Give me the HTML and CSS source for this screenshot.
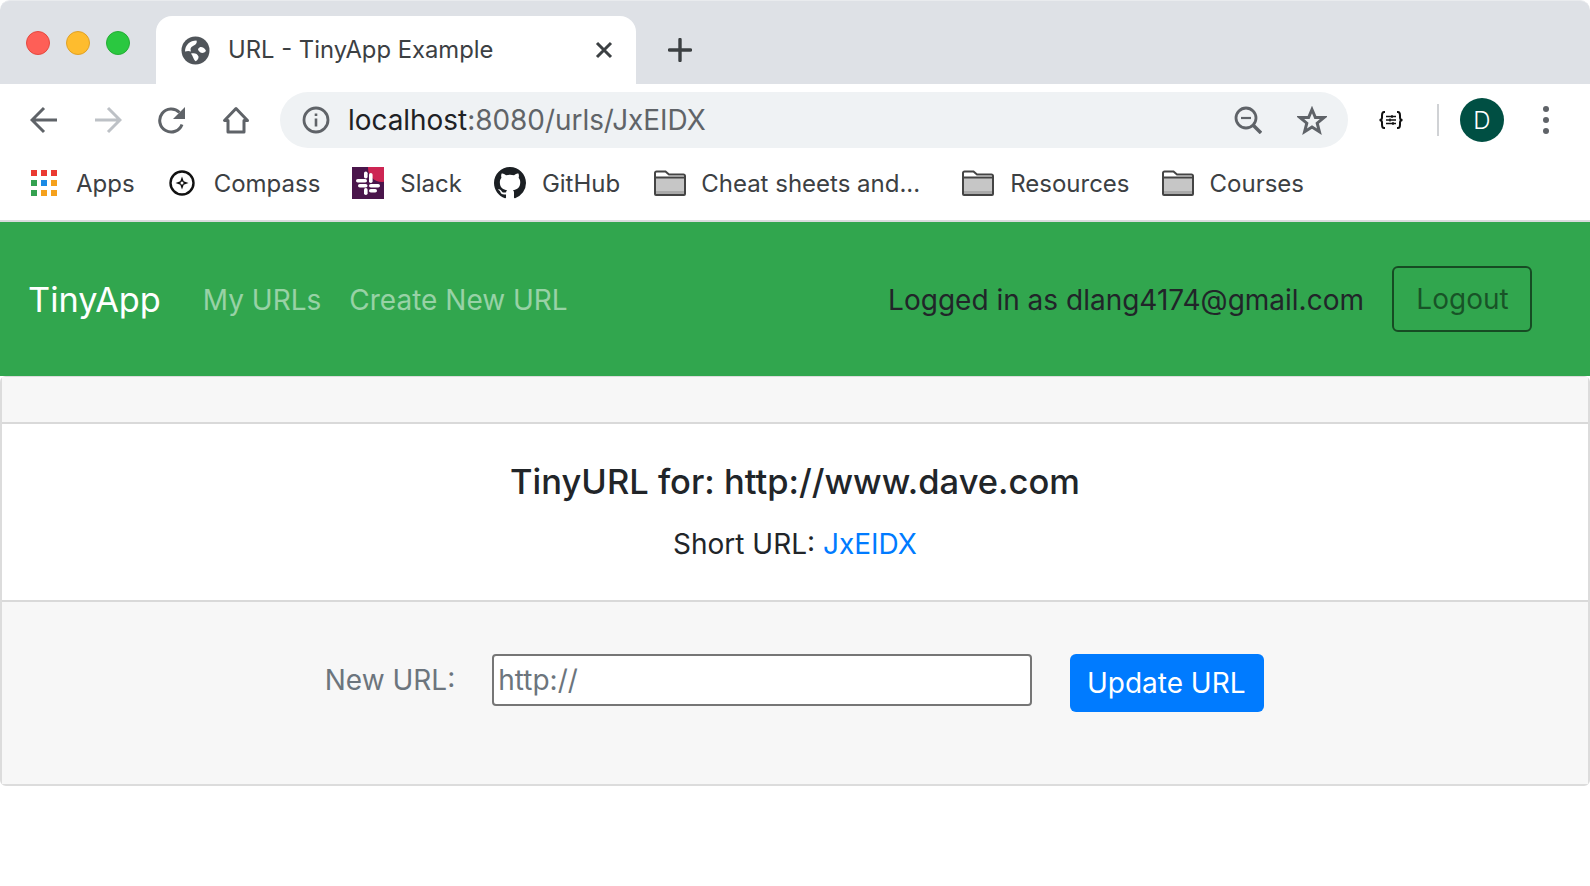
FILE: index.html
```html
<!DOCTYPE html>
<html lang="en">
<head>
<meta charset="utf-8">
<title>URL - TinyApp Example</title>
<link rel="stylesheet" href="styles.css">
</head>
<body>
<svg class="defs" width="0" height="0" aria-hidden="true">
  <symbol id="folder" viewBox="0 0 32 26">
    <path d="M1 24V3a1.5 1.5 0 0 1 1.5-1.5h9L15 4.500h14.500A1.500 1.500 0 0 1 31 6v18a1 1 0 0 1-1 1H2a1 1 0 0 1-1-1z" fill="#fff"/>
    <rect x="2" y="7.500" width="28" height="17" fill="#c6c6c6"/>
    <rect x="2" y="21" width="28" height="3.500" fill="#a9a9a9"/>
    <path d="M1 24V3a1.500 1.500 0 0 1 1.500-1.500h9L15 4.500h14.500A1.500 1.500 0 0 1 31 6v18a1 1 0 0 1-1 1H2a1 1 0 0 1-1-1zM1 7.500h30" fill="none" stroke="#444" stroke-width="2"/>
  </symbol>
</svg>
<header class="chrome">
  <div class="tabstrip">
    <div class="lights">
      <span class="light red"></span><span class="light yellow"></span><span class="light green"></span>
    </div>
    <div class="tab">
      <svg class="globe" width="29" height="29" viewBox="0 0 29 29"><circle cx="14.500" cy="14.500" r="14" fill="#50555a"/><path d="M4 15.500C4 9 9 4.500 15.500 4.500c1 2.500-1 4.500-3.500 5.500-2.500 1.200-3 3-2 5.500-2.500-1-4-.5-6 0zM10 17.500c3.500-1 6.500 0 7.500 3 .3 2-1 4-3 4.800-2-2-2.500-5-4.500-7.800zM17 13c1.500-2.500 3.500-2.500 5-1.500 1.500.8 2.500 2 3 3.500-1.500 2-4 2.500-5.500 1.500-1.200-.7-2.500-2-2.500-3.500z" fill="#fff"/></svg>
      <span class="tab-title">URL - TinyApp Example</span>
      <svg class="tab-close" width="18" height="18" viewBox="0 0 18 18"><path d="M2 2l14 14M16 2L2 16" stroke="#3c4043" stroke-width="3" fill="none"/></svg>
    </div>
    <svg class="new-tab" width="24" height="24" viewBox="0 0 24 24"><path d="M12 1.500v21M1.500 12h21" stroke="#3c4043" stroke-width="3.400" stroke-linecap="round" fill="none"/></svg>
  </div>
  <div class="toolbar">
    <svg class="tool" width="28" height="28" viewBox="0 0 28 28"><path d="M27 14H3M14 2L2 14l12 12" fill="none" stroke="#5f6368" stroke-width="3"/></svg>
    <svg class="tool" width="28" height="28" viewBox="0 0 28 28"><path d="M1 14h24M14 2l12 12-12 12" fill="none" stroke="#bdc1c6" stroke-width="3"/></svg>
    <svg class="tool" width="28" height="28" viewBox="0 0 28 28"><path d="M24 18.500A11.500 11.500 0 1 1 21.500 6.500" fill="none" stroke="#5f6368" stroke-width="3"/><path d="M27 1v12H15z" fill="#5f6368"/></svg>
    <svg class="tool" width="28" height="28" viewBox="0 0 28 28"><path d="M14 2.500L2.500 14.500H6V26h16V14.500h3.500z" fill="none" stroke="#5f6368" stroke-width="3" stroke-linejoin="round"/></svg>
    <div class="omnibox">
      <svg class="omni-info" width="28" height="28" viewBox="0 0 28 28"><circle cx="14" cy="14" r="12" fill="none" stroke="#5f6368" stroke-width="2.800"/><path d="M12.700 7.500h2.600v2.600h-2.600zM12.700 12.500h2.600v8h-2.600z" fill="#5f6368"/></svg>
      <span class="url"><span class="url-host">localhost</span>:8080/urls/JxEIDX</span>
      <svg class="omni-zoom" width="28" height="28" viewBox="0 0 28 28"><circle cx="12" cy="12" r="10" fill="none" stroke="#5f6368" stroke-width="2.800"/><path d="M19 19l8 8" stroke="#5f6368" stroke-width="3.500" fill="none"/><path d="M7 12h10" stroke="#5f6368" stroke-width="2.200" fill="none"/></svg>
      <svg class="omni-star" width="30" height="29" viewBox="0 0 30 29"><path d="M15 3.500l3.400 8h8.600l-6.800 5.700 2.200 8.500L15 21l-7.400 4.700 2.200-8.500L3 11.500h8.600z" fill="none" stroke="#5f6368" stroke-width="3"/></svg>
    </div>
    <svg class="ext" width="26" height="18" viewBox="0 0 26 18"><path d="M7 1H6C4.200 1 4 2.500 4 4.500V6.500C4 8 3.200 9 1.500 9 3.200 9 4 10 4 11.500V13.500C4 15.500 4.200 17 6 17H7M19 1h1c1.800 0 2 1.500 2 3.500v2c0 1.500.8 2.500 2.500 2.500-1.700 0-2.500 1-2.500 2.500v2c0 2-.2 3.500-2 3.500h-1" fill="none" stroke="#111" stroke-width="2"/><path d="M8 5.500h10M8 9h10M8 12.500h10" stroke="#111" stroke-width="1.500" fill="none"/><path d="M14 4v3M12 7.500v3M15 11v3" stroke="#111" stroke-width="1.300" fill="none"/></svg>
    <span class="tool-sep"></span>
    <span class="avatar">D</span>
    <span class="kebab"><i></i><i></i><i></i></span>
  </div>
  <nav class="bookmarks">
    <a class="bm bm-apps"><svg width="26" height="26" viewBox="0 0 26 26" class="bm-icon"><rect x="0" y="0" width="6" height="6" fill="#ea3a32"/><rect x="10" y="0" width="6" height="6" fill="#ea3a32"/><rect x="20" y="0" width="6" height="6" fill="#ea3a32"/><rect x="0" y="10" width="6" height="6" fill="#34a150"/><rect x="10" y="10" width="6" height="6" fill="#1a8ae6"/><rect x="20" y="10" width="6" height="6" fill="#f5a11d"/><rect x="0" y="20" width="6" height="6" fill="#34a150"/><rect x="10" y="20" width="6" height="6" fill="#f5a11d"/><rect x="20" y="20" width="6" height="6" fill="#f5a11d"/></svg><span>Apps</span></a>
    <a class="bm bm-compass"><svg width="26" height="26" viewBox="0 0 26 26" class="bm-icon"><circle cx="13" cy="13" r="11.500" fill="none" stroke="#111" stroke-width="2.400"/><path d="M13 6.500l1.700 4.800 4.800 1.700-4.800 1.700-1.700 4.800-1.700-4.800-4.800-1.700 4.800-1.700z" fill="#111"/><circle cx="13" cy="13" r="1.500" fill="#fff"/></svg><span>Compass</span></a>
    <a class="bm bm-slack"><svg width="32" height="32" viewBox="0 0 32 32" class="bm-icon"><rect width="32" height="32" fill="#4a154b"/><circle cx="30" cy="1" r="14" fill="#cd2553"/><g fill="#fff"><rect x="4" y="12" width="11" height="3.600" rx="1.800"/><rect x="12" y="4.500" width="3.600" height="7" rx="1.800"/><rect x="17" y="6" width="3.600" height="10" rx="1.800"/><rect x="17" y="17" width="11" height="3.600" rx="1.800"/><rect x="6" y="17" width="9.500" height="3.600" rx="1.800"/><rect x="12" y="21" width="3.600" height="7" rx="1.800"/><rect x="17" y="22" width="8" height="3.600" rx="1.800"/></g></svg><span>Slack</span></a>
    <a class="bm bm-github"><svg width="32" height="32" viewBox="0 0 16 16" class="bm-icon"><path fill="#1b1f23" d="M8 0C3.580 0 0 3.580 0 8c0 3.540 2.290 6.530 5.470 7.590.4.070.55-.17.55-.38 0-.19-.01-.82-.01-1.490-2.010.37-2.530-.49-2.690-.94-.09-.23-.48-.94-.82-1.130-.28-.15-.68-.52-.01-.53.63-.01 1.080.58 1.230.82.72 1.210 1.870.87 2.330.66.07-.52.28-.87.51-1.070-1.780-.2-3.640-.89-3.640-3.950 0-.87.31-1.590.82-2.150-.08-.2-.36-1.020.08-2.120 0 0 .67-.21 2.200.82.64-.18 1.320-.27 2-.27.68 0 1.360.09 2 .27 1.530-1.040 2.200-.82 2.200-.82.44 1.100.16 1.920.08 2.120.51.56.82 1.270.82 2.150 0 3.070-1.870 3.750-3.650 3.950.29.25.54.73.54 1.480 0 1.070-.01 1.930-.01 2.200 0 .21.15.46.55.38A8.013 8.013 0 0 0 16 8c0-4.420-3.580-8-8-8z"/></svg><span>GitHub</span></a>
    <a class="bm bm-cheat"><svg width="32" height="26" class="bm-icon"><use href="#folder"/></svg><span>Cheat sheets and...</span></a>
    <a class="bm bm-res"><svg width="32" height="26" class="bm-icon"><use href="#folder"/></svg><span>Resources</span></a>
    <a class="bm bm-courses"><svg width="32" height="26" class="bm-icon"><use href="#folder"/></svg><span>Courses</span></a>
  </nav>
</header>
<div class="navbar">
  <a class="brand">TinyApp</a>
  <a class="nav-link nav-first">My URLs</a>
  <a class="nav-link">Create New URL</a>
  <span class="logged">Logged in as dlang4174@gmail.com</span>
  <button class="logout" type="button">Logout</button>
</div>
<main class="card">
  <div class="card-header"></div>
  <div class="card-body">
    <h5 class="card-title">TinyURL for: http://www.dave.com</h5>
    <p class="card-text">Short URL: <a class="short-link">JxEIDX</a></p>
  </div>
  <div class="card-footer">
    <label class="url-label" for="longURL">New URL:</label>
    <input class="url-input" id="longURL" type="text" placeholder="http://">
    <button class="update" type="button">Update URL</button>
  </div>
</main>
</body>
</html>
```
FILE: styles.css
```css
* { box-sizing: border-box; }
html, body { margin: 0; padding: 0; background: #fff; }
body { width: 1590px; height: 886px; overflow: hidden; font-family: Inter, "Liberation Sans", sans-serif; }
.defs { position: absolute; }

.tabstrip { height: 84px; display: flex; align-items: flex-end; background: #dee1e6; border-top: 1px solid #e9ebee; border-radius: 10px 10px 0 0; }
.lights { display: flex; gap: 16px; width: 156px; padding: 0 0 29px 26px; align-self: flex-end; }
.light { width: 24px; height: 24px; border-radius: 50%; }
.red { background: #fe5f57; border: 1px solid #e5493f; }
.yellow { background: #febc2e; border: 1px solid #e0a126; }
.green { background: #2ac840; border: 1px solid #24ad35; }
.tab { width: 480px; height: 68px; background: #fff; border-radius: 16px 16px 0 0; display: flex; align-items: center; padding: 0 23px 0 25px; }
.globe { flex: none; }
.tab-title { margin: 0 0 2px 18px; font-size: 23.8px; color: #3c4043; white-space: nowrap; flex: 1; }
.new-tab { margin: 0 0 22px 32px; }

.toolbar { height: 66px; display: flex; align-items: center; padding: 6px 0 0 30px; background: #fff; }
.tool { flex: none; margin-right: 36px; }
.tool:nth-of-type(4) { margin-right: 0; }
.omnibox { width: 1068px; height: 56px; margin: 0 0 0 30px; padding: 0 21px 0 22px; background: #eff2f4; border-radius: 28px; display: flex; align-items: center; }
.url { margin-left: 18px; flex: 1; font-size: 27.9px; color: #606468; white-space: nowrap; }
.url-host { color: #202124; }
.omni-star { margin-left: 35px; }
.ext { margin-left: 30px; flex: none; }
.tool-sep { width: 2px; height: 32px; background: #d0d2d5; margin-left: 33px; }
.avatar { width: 44px; height: 44px; border-radius: 50%; background: #004f43; color: #fff; margin-left: 21px; display: flex; align-items: center; justify-content: center; font-size: 24px; font-weight: 300; flex: none; }
.kebab { display: flex; flex-direction: column; gap: 5px; margin-left: 39px; }
.kebab i { width: 6px; height: 6px; border-radius: 50%; background: #5f6368; display: block; }

.bookmarks { height: 72px; padding: 0 0 4px 31px; display: flex; align-items: center; background: #fff; border-bottom: 2px solid #d9dbdd; }
.bm { display: flex; align-items: center; font-size: 24px; color: #3c4043; white-space: nowrap; }
.bm-icon { flex: none; }
.bm-apps { gap: 19px; margin-right: 34px; }
.bm-compass { gap: 19px; margin-right: 32px; }
.bm-slack { gap: 16px; margin-right: 32px; }
.bm-github { gap: 16px; margin-right: 34px; }
.bm-cheat { gap: 15px; margin-right: 42px; }
.bm-res { gap: 16px; margin-right: 32px; }
.bm-courses { gap: 16px; }

.navbar { height: 154px; background: #31a64e; display: flex; align-items: center; padding: 2px 58px 0 28px; font-size: 28px; }
.brand { color: #fff; font-size: 34.3px; margin-top: -2px; }
.nav-link { color: rgba(255,255,255,.5); margin-left: 28px; }
.nav-first { margin-left: 42px; }
.logged { margin-left: auto; color: #212529; }
.logout { margin-left: 28px; width: 140px; height: 66px; margin-top: -2px; border: 2px solid rgba(0,0,0,.55); border-radius: 6px; background: transparent; color: rgba(0,0,0,.5); font: inherit; padding: 0 0 0 1px; }

.card { height: 410px; border: 2px solid #dcdcdc; border-top-width: 1px; border-radius: 6px; display: flex; flex-direction: column; }
.card-header { height: 47px; background: #f7f7f7; border-bottom: 2px solid #d9d9d9; flex: none; }
.card-body { flex: 1; text-align: center; padding-top: 34px; }
.card-title { margin: 0; font-size: 34.5px; line-height: 48px; font-weight: 500; color: #212529; }
.card-text { margin: 16px 0 0; font-size: 28px; line-height: 44px; color: #212529; }
.short-link { color: #007bff; }
.card-footer { height: 184px; flex: none; background: #f7f7f7; border-top: 2px solid #d9d9d9; display: flex; justify-content: center; align-items: flex-start; padding: 52px 2px 0 0; }
.url-label { font-size: 28px; color: #6c757d; line-height: 52px; margin-right: 38px; position: relative; left: 1px; }
.url-input { width: 540px; height: 52px; border: 2px solid #767676; border-radius: 4px; background: #fff; padding: 0 4px; font: 28px Inter, "Liberation Sans", sans-serif; color: #212529; margin-right: 38px; }
.url-input::placeholder { color: #6c757d; opacity: 1; }
.update { width: 194px; height: 58px; border: 0; border-radius: 6px; background: #007bff; color: #fff; font: 28px Inter, "Liberation Sans", sans-serif; padding: 0 2px 0 0; }
```
